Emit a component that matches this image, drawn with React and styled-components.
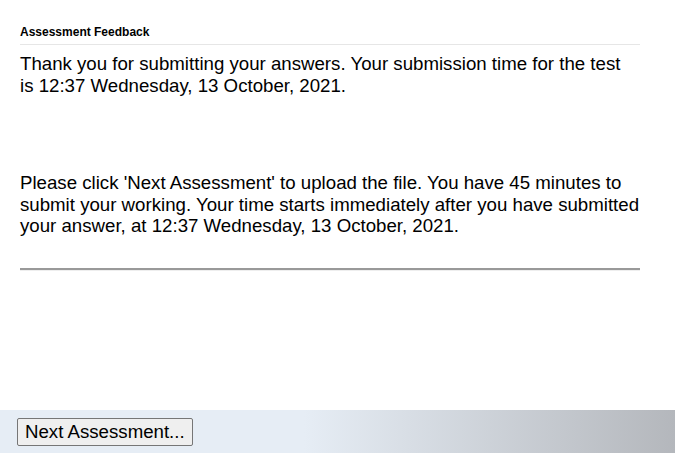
import React from 'react';
import styled, { createGlobalStyle } from 'styled-components';

const GlobalStyle = createGlobalStyle`
  html, body {
    margin: 0;
    padding: 0;
    background: #ffffff;
    font-family: "Liberation Sans", Arial, sans-serif;
    color: #000000;
  }
`;

const Page = styled.div`
  display: flex;
  flex-direction: column;
  height: 453px;
  width: 675px;
  overflow: hidden;
`;

const Content = styled.main`
  flex: 1;
  padding: 20px 35px 0 20px;
`;

const Title = styled.h2`
  margin: 0;
  font-size: 12px;
  font-weight: bold;
  line-height: 14px;
  padding: 5px 0 5px;
  border-bottom: 1px solid #e6e6e6;
`;

const Message = styled.p`
  margin: ${props => props.$gap || '0'};
  padding-right: ${props => props.$inset || '0'};
  font-size: 18.67px;
  line-height: 21.5px;
`;

const Rule = styled.hr`
  margin: 31px 0 0;
  border: none;
  border-top: 2px solid #999999;
  border-bottom: 1px solid #eeeeee;
  height: 0;
`;

const Footer = styled.footer`
  height: 43px;
  display: flex;
  align-items: center;
  padding: 0 17px;
  background: linear-gradient(to right, #e6edf5 0%, #e6edf5 45%, #b4b7bc 100%);
`;

const Button = styled.button`
  font-family: "Liberation Sans", Arial, sans-serif;
  font-size: 18.67px;
  height: 28px;
  padding: 0 7px;
  background: #efefef;
  border: 1px solid #767676;
  border-radius: 2px;
  color: #000000;
  cursor: pointer;
`;

export default function App() {
  return (
    <Page>
      <GlobalStyle />
      <Content>
        <Title>Assessment Feedback</Title>
        <Message $gap="8px 0 0" $inset="12px">
          Thank you for submitting your answers. Your submission time for the test
          is 12:37 Wednesday, 13 October, 2021.
        </Message>
        <Message $gap="76px 0 0">
          Please click 'Next Assessment' to upload the file. You have 45 minutes to
          submit your working. Your time starts immediately after you have submitted
          your answer, at 12:37 Wednesday, 13 October, 2021.
        </Message>
        <Rule />
      </Content>
      <Footer>
        <Button>Next Assessment...</Button>
      </Footer>
    </Page>
  );
}
